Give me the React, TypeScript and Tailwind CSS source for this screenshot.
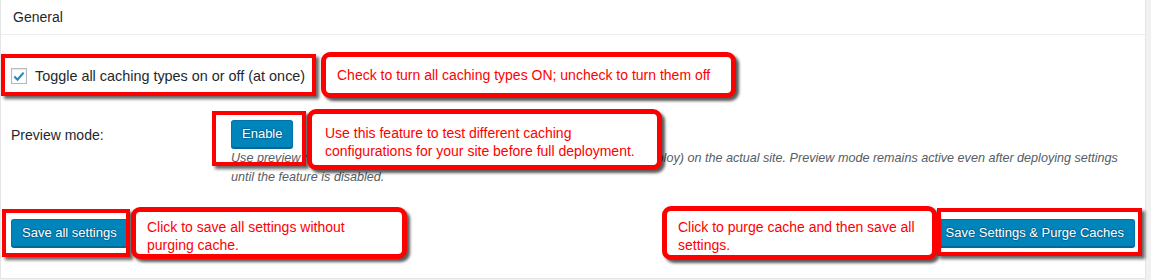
import React from "react";

const font = { fontFamily: '"Liberation Sans", Arial, sans-serif' };

function Callout({ className, children }: { className: string; children: React.ReactNode }) {
  return (
    <div
      className={`absolute bg-white border-[5px] border-[#ff0000] rounded-[9px] shadow-[3px_3px_3px_rgba(0,0,0,0.65)] text-[#ff0000] text-[14px] leading-[18px] ${className}`}
    >
      {children}
    </div>
  );
}

function Frame({ className }: { className: string }) {
  return (
    <div
      className={`absolute border-[4px] border-[#ff0000] shadow-[3px_3px_3px_rgba(0,0,0,0.6)] ${className}`}
    />
  );
}

const btn =
  "h-[28px] px-[10px] rounded-[3px] bg-[#0085ba] border border-[#0073aa] border-b-[#006799] shadow-[0_1px_0_#006799] text-white text-[13px] leading-[26px] [text-shadow:0_-1px_1px_#006799,1px_0_1px_#006799,0_1px_1px_#006799,-1px_0_1px_#006799]";

export default function App() {
  return (
    <div className="relative w-[1151px] h-[280px] bg-[#f1f1f1] overflow-hidden" style={font}>
      <div className="w-[1146px] h-[279px] bg-white border-l border-r border-b border-[#e5e5e5] flex flex-col text-[#23282d]">
        <div className="h-[35px] border-b border-[#eeeeee] flex items-center px-[12px] text-[14px]">
          General
        </div>
        <div className="flex flex-col px-[10px]">
          <div className="mt-[33px] flex items-center h-[16px]">
            <div className="w-[16px] h-[16px] border border-[#b4b9be] bg-white flex items-center justify-center shadow-[inset_0_1px_2px_rgba(0,0,0,0.1)]">
              <svg width="15" height="15" viewBox="0 0 15 15">
                <path d="M2.5 7.6 L5.9 11 L12.4 3.4" fill="none" stroke="#1e8cbe" strokeWidth="2.3" />
              </svg>
            </div>
            <span className="ml-[8px] text-[14.4px] leading-[20px]">Toggle all caching types on or off (at once)</span>
          </div>
          <div className="mt-[36px] flex">
            <div className="w-[220px] pt-[5px] text-[14px] leading-[20px]">Preview mode:</div>
            <div className="flex flex-col items-start">
              <button className={btn}>Enable</button>
              <p className="mt-[1px] text-[12.6px] leading-[19px] italic text-[#555d66] w-[900px]">
                Use preview mode to test configuration scenarios prior to releasing them (deploy) on the actual site. Preview mode remains active even after deploying settings until the feature is disabled.
              </p>
            </div>
          </div>
          <div className="mt-[32px] flex justify-between">
            <button className={btn}>Save all settings</button>
            <button className={btn}>Save Settings &amp; Purge Caches</button>
          </div>
        </div>
      </div>

      <Frame className="left-[1px] top-[54px] w-[315px] h-[42px]" />
      <Callout className="left-[321px] top-[52px] w-[415px] h-[46px] pl-[11px] pt-[9px]">
        Check to turn all caching types ON; uncheck to turn them off
      </Callout>

      <Frame className="left-[212px] top-[111px] w-[94px] h-[55px]" />
      <Callout className="left-[307px] top-[109px] w-[355px] h-[61px] pl-[13px] pt-[10px]">
        <div>Use this feature to test different caching</div>
        <div>configurations for your site before full deployment.</div>
      </Callout>

      <Frame className="left-[2px] top-[209px] w-[128px] h-[48px]" />
      <Callout className="left-[131px] top-[207px] w-[276px] h-[52px] pl-[11px] pt-[6px]">
        <div>Click to save all settings without</div>
        <div>purging cache.</div>
      </Callout>

      <Callout className="left-[662px] top-[206px] w-[275px] h-[54px] pl-[11px] pt-[7px]">
        <div>Click to purge cache and then save all</div>
        <div>settings.</div>
      </Callout>
      <Frame className="left-[937px] top-[208px] w-[205px] h-[48px]" />
    </div>
  );
}
